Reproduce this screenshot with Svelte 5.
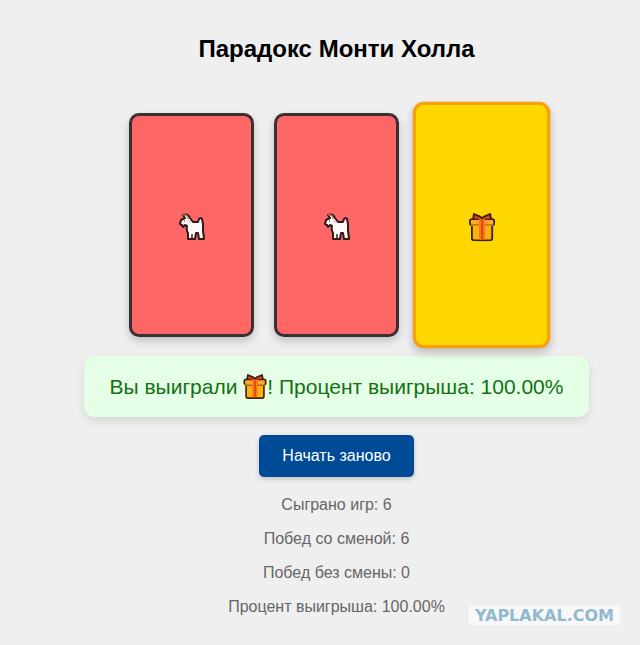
<script lang="ts">
	type Prize = 'goat' | 'gift';

	const doors: { id: number; prize: Prize; selected: boolean }[] = [
		{ id: 1, prize: 'goat', selected: false },
		{ id: 2, prize: 'goat', selected: false },
		{ id: 3, prize: 'gift', selected: true }
	];

	let switchWins = $state(6);
	let stayWins = $state(0);
	let games = $state(6);

	const percent = $derived((games ? ((switchWins + stayWins) / games) * 100 : 0).toFixed(2));

	function restart() {
		games = 0;
		switchWins = 0;
		stayWins = 0;
	}
</script>

{#snippet gift()}
	<svg class="icon" viewBox="0 0 26 28" role="img" aria-label="Приз">
		<path d="M4 7 5 1 10 3 13 5 16 3 21 1 22 7Z" fill="#f0401c" stroke="#3a2212" stroke-width="1.8" stroke-linejoin="round" />
		<path d="M3 12H23V25Q23 27 21 27H5Q3 27 3 25Z" fill="#ffb00f" stroke="#3a2212" stroke-width="1.8" />
		<rect x="1" y="6" width="24" height="6" rx="2" fill="#fda72b" stroke="#3a2212" stroke-width="1.8" />
		<path d="M2 12H24" stroke="#e08a10" stroke-width="1.8" />
		<path d="M10 6H16V26H10Z" fill="#f8791b" />
		<path d="M13 6V26" stroke="#e04a18" stroke-width="2" />
		<path d="M6 6 6 3 13 6ZM20 6 20 3 13 6Z" fill="#e0341a" />
	</svg>
{/snippet}

{#snippet goat()}
	<svg class="icon" viewBox="0 0 26 28" role="img" aria-label="Коза">
		<path
			d="M4 2Q9 0 11 5L14 9H19L20 6Q22 4 23 6L24 11V18L25 25V26H20L19 20H17L16 26H9V20Q7 17 8 13L6 12 4 14 3 12 1 11 2 7 6 5Z"
			fill="#fffafa"
			stroke="#30191a"
			stroke-width="2"
			stroke-linejoin="round"
		/>
		<path d="M13 25V21" stroke="#30191a" stroke-width="1.4" />
		<path d="M4 2Q9 1 9 6" fill="none" stroke="#b58560" stroke-width="1.4" />
		<path d="M9 6 12 9 10 10Z" fill="#f0c2ac" />
		<path d="M5 8H6" stroke="#30191a" />
	</svg>
{/snippet}

<main>
	<h1>Парадокс Монти Холла</h1>

	<div class="doors">
		{#each doors as door (door.id)}
			<button
				type="button"
				class="door"
				class:goat={door.prize === 'goat'}
				class:selected={door.selected}
				aria-label="Дверь {door.id}"
			>
				{#if door.prize === 'gift'}
					{@render gift()}
				{:else}
					{@render goat()}
				{/if}
			</button>
		{/each}
	</div>

	<p class="message">Вы выиграли {@render gift()}! Процент выигрыша: {percent}%</p>

	<button type="button" class="restart" onclick={restart}>Начать заново</button>

	<div class="stats">
		<p>Сыграно игр: {games}</p>
		<p>Побед со сменой: {switchWins}</p>
		<p>Побед без смены: {stayWins}</p>
		<p>Процент выигрыша: {percent}%</p>
	</div>

	<span class="watermark">YAPLAKAL.COM</span>
</main>

<style>
	:global(body) {
		background: #efefef;
	}

	main {
		position: relative;
		display: flex;
		flex-direction: column;
		align-items: center;
		padding: 34px 0 29px 33px;
		font-family: 'Liberation Sans', Arial, sans-serif;
		color: #000;
	}

	h1 {
		margin: 0 0 50px;
		font-size: 24px;
		line-height: 29px;
	}

	.doors {
		display: flex;
		gap: 20px;
	}

	.door {
		display: flex;
		align-items: center;
		justify-content: center;
		width: 125px;
		height: 224px;
		padding: 4px 0 0;
		border: 3px solid #3a3030;
		border-radius: 10px;
		background: #ffd700;
		box-shadow: 0 4px 8px rgba(0, 0, 0, 0.2);
		cursor: pointer;
	}

	.door.goat {
		background: #ff6767;
	}

	.door.selected {
		border-color: #f9a010;
		transform: scale(1.1);
	}

	.icon {
		width: 26px;
		height: 28px;
	}

	.selected .icon {
		width: 24px;
		height: 26px;
	}

	.message {
		margin: 19px 0 18px;
		padding: 18px 26px;
		border-radius: 10px;
		background: #e4ffe5;
		box-shadow: 0 4px 10px rgba(0, 0, 0, 0.1);
		color: #137013;
		font-size: 21px;
		line-height: 25px;
	}

	.message .icon {
		width: 24px;
		height: 25px;
		vertical-align: bottom;
	}

	.restart {
		padding: 10px 23px;
		border: 0;
		border-radius: 5px;
		background: #004b98;
		box-shadow: 0 2px 5px rgba(0, 0, 0, 0.2);
		color: #fff;
		font-family: inherit;
		font-size: 16px;
		line-height: 22px;
		cursor: pointer;
	}

	.stats {
		display: flex;
		flex-direction: column;
		gap: 16px;
		margin-top: 19px;
		color: #666;
		font-size: 16px;
		line-height: 18px;
		text-align: center;
	}

	.stats p {
		margin: 0;
	}

	.watermark {
		position: absolute;
		right: 20px;
		bottom: 20px;
		padding: 0 6px;
		background: #f8f8f8;
		color: #92b9cf;
		font-family: 'DejaVu Sans', sans-serif;
		font-size: 16px;
		font-weight: bold;
		line-height: 19px;
	}
</style>
